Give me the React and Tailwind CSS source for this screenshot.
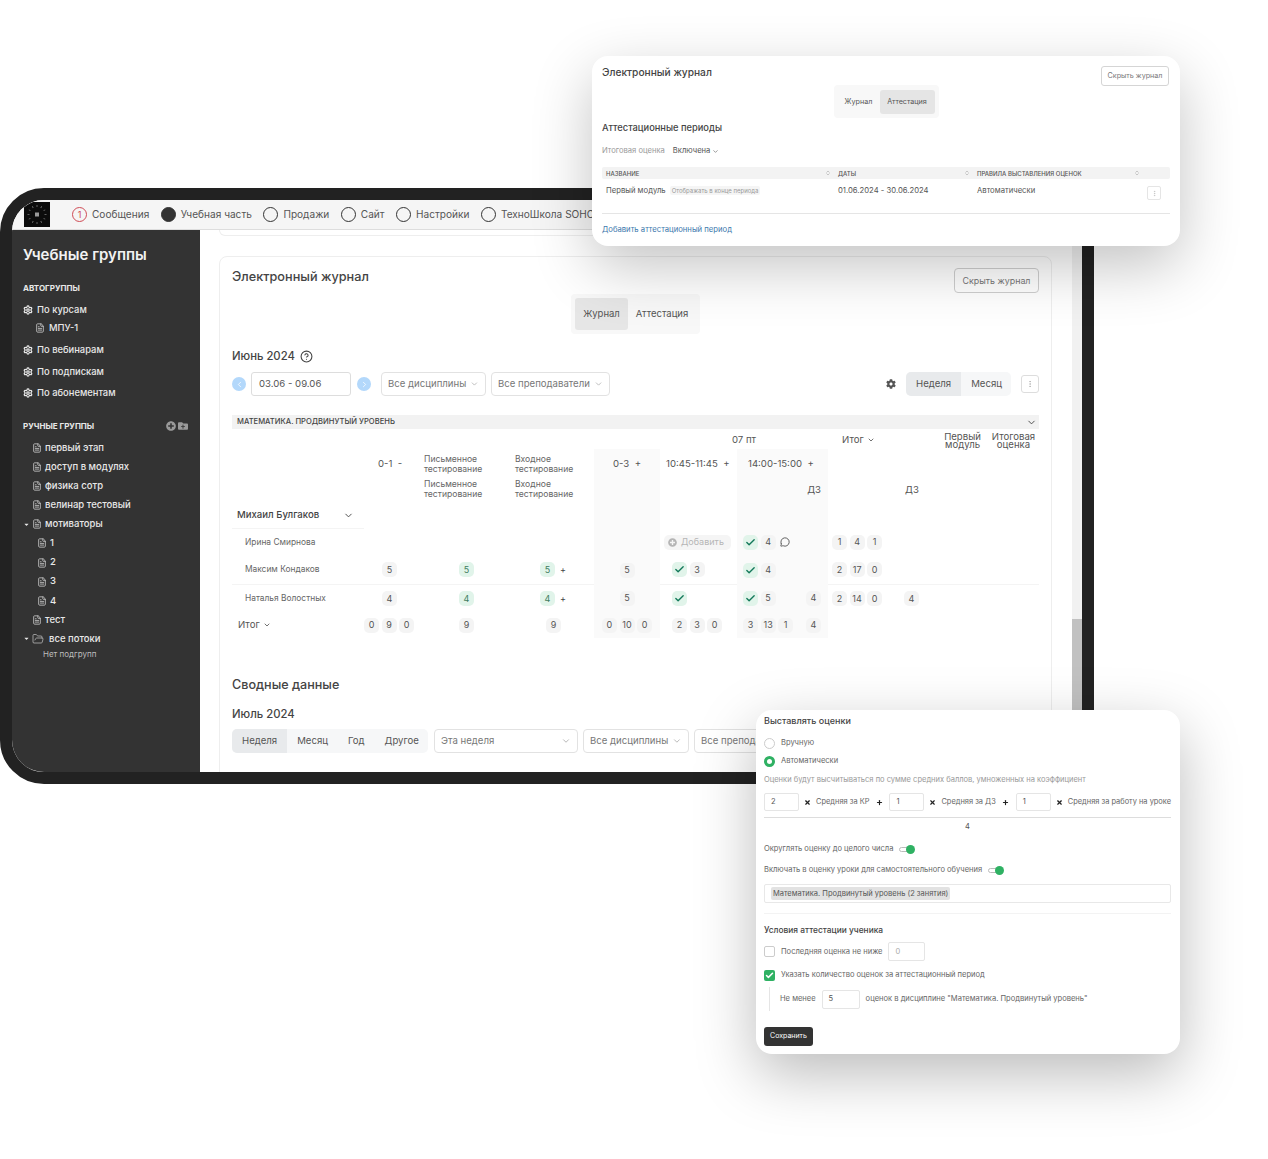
import { Check, ChevronDown, ChevronLeft, ChevronRight, ChevronsUpDown, CircleHelp, EllipsisVertical, FileText, FolderOpen, MessageCircle, Plus, Settings, X } from 'lucide-react';
import { FaCaretDown, FaCog, FaFolderPlus, FaPlusCircle } from 'react-icons/fa';

const navItems = [
  { label: 'Учебная часть', filled: true },
  { label: 'Продажи' },
  { label: 'Сайт' },
  { label: 'Настройки' },
  { label: 'ТехноШкола SOHO' },
];

// --- sidebar rows ---
const autoGroups = [
  { label: 'По вебинарам' },
  { label: 'По подпискам' },
  { label: 'По абонементам' },
];

const manualGroups = [
  { label: 'первый этап', pl: 'pl-[9px]' },
  { label: 'доступ в модулях', pl: 'pl-[9px]' },
  { label: 'физика сотр', pl: 'pl-[9px]' },
  { label: 'велинар тестовый', pl: 'pl-[9px]' },
  { label: 'мотиваторы', caret: true },
  { label: '1', pl: 'pl-[14px]' },
  { label: '2', pl: 'pl-[14px]' },
  { label: '3', pl: 'pl-[14px]' },
  { label: '4', pl: 'pl-[14px]' },
  { label: 'тест', pl: 'pl-[9px]' },
];

function Logo() {
  const angles = [0, 30, 60, 90, 120, 150, 180, 210, 240, 270, 300, 330];
  return (
    <svg viewBox="0 0 26 25" className="ml-[12px] mt-[2px] h-[25px] w-[26px] shrink-0 self-start bg-[#0c0c0c]">
      {angles.map(a => (
        <rect key={a} x="12.6" y="3" width="0.8" height="2" fill="#777777" transform={`rotate(${a} 13 12.5)`} />
      ))}
      <rect x="11" y="10.5" width="4" height="4" fill="#999999" />
    </svg>
  );
}

function Sidebar() {
  return (
    <aside className="w-[188px] shrink-0 bg-[#333333] text-[#e8e8e8] pl-[11px] pr-[12px] pt-[15px]">
      <h2 className="text-[15px] leading-[20px] font-semibold text-[#f2f2f2]">Учебные группы</h2>
      <div className="mt-[18px] text-[8px] leading-[10px] font-bold">АВТОГРУППЫ</div>
      <div className="mt-[11px] flex h-[12px] items-center gap-[4px] text-[9.4px] font-medium">
        <Settings size={10} strokeWidth={3} />По курсам
      </div>
      <div className="mt-[6px] flex h-[12px] items-center gap-[4px] pl-[12px] text-[9.4px] font-medium">
        <FileText size={10} className="text-[#c8c8c8]" />МПУ-1
      </div>
      {autoGroups.map(g => (
        <div key={g.label} className="mt-[9.8px] flex h-[12px] items-center gap-[4px] text-[9.4px] font-medium">
          <Settings size={10} strokeWidth={3} />{g.label}
        </div>
      ))}
      <div className="mt-[21px] flex h-[12px] items-center justify-between text-[8px] font-bold">
        <span>РУЧНЫЕ ГРУППЫ</span>
        <span className="flex items-center gap-[2px] text-[#9a9a9a]">
          <FaPlusCircle size={10} />
          <FaFolderPlus size={10} />
        </span>
      </div>
      <div className="mt-[6px]">
        {manualGroups.map(g => (
          <div key={g.label} className={`flex h-[19.1px] items-center text-[9.5px] font-medium ${g.pl || ''}`}>
            {g.caret && <FaCaretDown size={7} className="mr-[2px] text-[#e8e8e8]" />}
            <FileText size={10} className="mr-[3px] text-[#c8c8c8]" />
            {g.label}
          </div>
        ))}
        <div className="flex h-[19px] items-center text-[9.5px] font-medium">
          <FaCaretDown size={7} className="mr-[2px]" />
          <FolderOpen size={12} strokeWidth={1.4} className="mr-[5px] text-[#c8c8c8]" />
          все потоки
        </div>
        <div className="mt-[1px] pl-[20px] text-[8px] leading-[10px] text-[#bdbdbd]">Нет подгрупп</div>
      </div>
    </aside>
  );
}

function Chip({ children, tone }) {
  const toneClass = tone === 'green' ? 'bg-[#e1f4ea] text-[#3f7d5f]' : 'bg-[#f4f4f4] text-[#555555]';
  return (
    <span className={`flex h-[15px] w-[15px] shrink-0 items-center justify-center rounded-[5px] text-[9px] ${toneClass}`}>
      {children}
    </span>
  );
}

function CheckChip() {
  return (
    <span className="flex h-[15px] w-[15px] shrink-0 items-center justify-center rounded-[5px] bg-[#e1f4ea] text-[#14795a]">
      <Check size={11} strokeWidth={3} />
    </span>
  );
}

function Chips({ values, className = '' }) {
  return (
    <div className={`flex items-center gap-[2.6px] ${className}`}>
      {values.map((v, i) => <Chip key={i}>{v}</Chip>)}
    </div>
  );
}

const greyCol = 'bg-[#fafafa]';
const rowLine = 'border-b border-[#f4f4f4]';

function Journal() {
  const timeText = 'text-[9.6px] leading-[12px] text-[#555555] whitespace-nowrap';
  const lessonText = 'text-[8.6px] leading-[10px] text-[#666666]';
  const studentText = 'pl-[13px] text-[8.4px] text-[#666666]';
  const finalHead = 'text-center text-[9.6px] leading-[8px] text-[#555555]';

  return (
    <table className="mt-[3px] w-[807px] table-fixed">
      <colgroup>
        <col className="w-[132px]" />
        <col className="w-[60px]" />
        <col className="w-[91px]" />
        <col className="w-[79px]" />
        <col className="w-[66px]" />
        <col className="w-[77px]" />
        <col className="w-[91px]" />
        <col className="w-[72px]" />
        <col className="w-[40px]" />
        <col className="w-[48px]" />
        <col className="w-[51px]" />
      </colgroup>
      <tbody>
        <tr className="h-[17px] text-[#555555]">
          <td colSpan={5}></td>
          <td colSpan={2} className="text-center text-[9.6px]">07 пт</td>
          <td className="pl-[14px] text-[9.6px]">
            <span className="inline-flex items-center gap-[3px]">Итог <ChevronDown size={8} strokeWidth={2.5} /></span>
          </td>
          <td></td>
          <td className={`${finalHead} pr-[3px]`}>Первый модуль</td>
          <td className={finalHead}>Итоговая оценка</td>
        </tr>
        <tr className="h-[29px]">
          <td></td>
          <td className={`pl-[14px] ${timeText}`}>0-1 &nbsp;-</td>
          <td className={lessonText}>Письменное тестирование</td>
          <td className={lessonText}>Входное тестирование</td>
          <td className={`${greyCol} text-center ${timeText}`}>0-3 &nbsp;+</td>
          <td className={`pl-[6px] ${timeText}`}>10:45-11:45 &nbsp;+</td>
          <td className={`${greyCol} pl-[11px] ${timeText}`}>14:00-15:00 &nbsp;+</td>
          <td colSpan={4}></td>
        </tr>
        <tr className="h-[24px]">
          <td></td>
          <td></td>
          <td className={`${lessonText} pb-[2px]`}>Письменное тестирование</td>
          <td className={`${lessonText} pb-[2px]`}>Входное тестирование</td>
          <td className={greyCol}></td>
          <td></td>
          <td className={`${greyCol} pr-[7px] text-right text-[9.6px] text-[#555555]`}>ДЗ</td>
          <td></td>
          <td className="pl-[5px] text-[9.6px] text-[#555555]">ДЗ</td>
          <td colSpan={2}></td>
        </tr>
        <tr className="h-[26px]">
          <td className={rowLine}>
            <div className="flex items-center justify-between pl-[5px] pr-[10px] pt-[1px] text-[9.6px] font-medium text-[#444444]">
              Михаил Булгаков <ChevronDown size={11} />
            </div>
          </td>
          <td colSpan={3}></td>
          <td className={greyCol}></td>
          <td></td>
          <td className={greyCol}></td>
          <td colSpan={4}></td>
        </tr>
        <tr className="h-[28px]">
          <td className={studentText}>Ирина Смирнова</td>
          <td colSpan={3}></td>
          <td className={greyCol}></td>
          <td>
            <div className="ml-[4px] flex h-[15px] w-[67px] items-center gap-[4px] rounded-[5px] bg-[#f5f5f5] pl-[4px] text-[9px] text-[#b5b5b5]">
              <FaPlusCircle size={9} /> Добавить
            </div>
          </td>
          <td className={greyCol}>
            <div className="flex items-center gap-[2.6px] pl-[6px]">
              <CheckChip /><Chip>4</Chip>
              <MessageCircle size={10} className="ml-[2px] text-[#444444]" />
            </div>
          </td>
          <td><Chips values={[1, 4, 1]} className="pl-[4px]" /></td>
          <td colSpan={3}></td>
        </tr>
        <tr className="h-[28px]">
          <td className={`${studentText} ${rowLine}`}>Максим Кондаков</td>
          <td className={rowLine}><div className="pl-[18px]"><Chip>5</Chip></div></td>
          <td className={rowLine}><div className="pl-[35px]"><Chip tone="green">5</Chip></div></td>
          <td className={rowLine}>
            <div className="flex items-center gap-[5px] pl-[25px] text-[9px] text-[#444444]"><Chip tone="green">5</Chip>+</div>
          </td>
          <td className={greyCol}><div className="flex justify-center"><Chip>5</Chip></div></td>
          <td className={rowLine}><div className="flex items-center gap-[2.6px] pl-[12px]"><CheckChip /><Chip>3</Chip></div></td>
          <td className={greyCol}><div className="flex items-center gap-[2.6px] pl-[6px]"><CheckChip /><Chip>4</Chip></div></td>
          <td className={rowLine}><Chips values={[2, 17, 0]} className="pl-[4px]" /></td>
          <td colSpan={3} className={rowLine}></td>
        </tr>
        <tr className="h-[28px]">
          <td className={studentText}>Наталья Волостных</td>
          <td><div className="pl-[18px]"><Chip>4</Chip></div></td>
          <td><div className="pl-[35px]"><Chip tone="green">4</Chip></div></td>
          <td>
            <div className="flex items-center gap-[5px] pl-[25px] text-[9px] text-[#444444]"><Chip tone="green">4</Chip>+</div>
          </td>
          <td className={greyCol}><div className="flex justify-center"><Chip>5</Chip></div></td>
          <td><div className="pl-[12px]"><CheckChip /></div></td>
          <td className={greyCol}>
            <div className="flex items-center gap-[2.6px] pl-[6px] pr-[7px]">
              <CheckChip /><Chip>5</Chip><span className="ml-auto"><Chip>4</Chip></span>
            </div>
          </td>
          <td><Chips values={[2, 14, 0]} className="pl-[4px]" /></td>
          <td><div className="pl-[4px]"><Chip>4</Chip></div></td>
          <td colSpan={2}></td>
        </tr>
        <tr className="h-[26px]">
          <td className="pl-[6px] text-[9.6px] text-[#555555]">
            <span className="inline-flex items-center gap-[3px]">Итог <ChevronDown size={8} strokeWidth={2.5} /></span>
          </td>
          <td><Chips values={[0, 9, 0]} /></td>
          <td><div className="pl-[35px]"><Chip>9</Chip></div></td>
          <td><div className="pl-[31px]"><Chip>9</Chip></div></td>
          <td className={greyCol}><Chips values={[0, 10, 0]} className="justify-center" /></td>
          <td><Chips values={[2, 3, 0]} className="pl-[12px]" /></td>
          <td className={greyCol}>
            <div className="flex items-center gap-[2.6px] pl-[6px] pr-[7px]">
              <Chip>3</Chip><Chip>13</Chip><Chip>1</Chip><span className="ml-auto"><Chip>4</Chip></span>
            </div>
          </td>
          <td colSpan={4}></td>
        </tr>
      </tbody>
    </table>
  );
}

function Select({ label, className = '' }) {
  return (
    <div className={`flex h-[24px] shrink-0 items-center justify-between rounded-[4px] border border-[#e2e2e2] bg-white pl-[6px] pr-[6px] text-[9.6px] text-[#777777] whitespace-nowrap ${className}`}>
      {label} <ChevronDown size={10} className="ml-[4px] text-[#aaaaaa]" />
    </div>
  );
}

function Segmented({ items, className = '' }) {
  return (
    <div className={`flex h-[24px] shrink-0 items-center rounded-[5px] bg-[#f6f7f8] text-[9.6px] text-[#555555] ${className}`}>
      {items.map((item, i) => (
        <span key={item} className={`flex h-full items-center px-[10px] ${i === 0 ? 'rounded-l-[5px] bg-[#e8eaec]' : ''}`}>{item}</span>
      ))}
    </div>
  );
}

function MainPanel() {
  return (
    <main className="relative min-w-0 flex-1 overflow-hidden bg-white pl-[19px]">
      <div className="h-[6px] w-[833px] rounded-b-[8px] border border-t-0 border-[#eeeeee]"></div>
      <section className="mt-[20px] h-[600px] w-[833px] rounded-[8px] border border-[#eeeeee] px-[12px]">
        <div className="flex h-[37px] items-start justify-between pt-[11px]">
          <h3 className="text-[12.7px] leading-[18px] font-medium text-[#444444]">Электронный журнал</h3>
          <button className="h-[25px] w-[85px] rounded-[4px] border border-[#cfcfcf] text-[8.9px] text-[#777777]">Скрыть журнал</button>
        </div>
        <div className="flex justify-center">
          <div className="flex h-[40px] w-[129px] items-center rounded-[4px] bg-[#f8f8f8] p-[4px] text-[9.5px] text-[#555555]">
            <span className="flex h-full w-[53px] items-center justify-center rounded-[3px] bg-[#e6e6e6]">Журнал</span>
            <span className="flex-1 text-center">Аттестация</span>
          </div>
        </div>
        <div className="mt-[13px] flex items-center gap-[5px] text-[11.3px] leading-[18px] font-medium text-[#444444]">
          Июнь 2024 <CircleHelp size={13} />
        </div>
        <div className="mt-[7px] flex h-[24px] items-center">
          <span className="flex h-[14px] w-[14px] items-center justify-center rounded-full bg-[#b3d8fb] text-white"><ChevronLeft size={9} /></span>
          <div className="ml-[5px] flex h-[24px] w-[100px] items-center rounded-[3px] border border-[#dddddd] pl-[7px] text-[9.6px] text-[#555555]">03.06 - 09.06</div>
          <span className="ml-[6px] flex h-[14px] w-[14px] items-center justify-center rounded-full bg-[#b3d8fb] text-white"><ChevronRight size={9} /></span>
          <Select label="Все дисциплины" className="ml-[10px] w-[105px]" />
          <Select label="Все преподаватели" className="ml-[5px] w-[119px]" />
          <FaCog size={10} className="ml-[276px] text-[#555555]" />
          <Segmented items={['Неделя', 'Месяц']} className="ml-[10px] w-[105px]" />
          <span className="ml-[10px] flex h-[18px] w-[18px] items-center justify-center rounded-[3px] border border-[#dddddd] text-[#aaaaaa]"><EllipsisVertical size={8} /></span>
        </div>
        <div className="mt-[19px] flex h-[14px] items-center justify-between bg-[#f2f2f2] pl-[5px] pr-[2px] text-[7.6px] font-medium text-[#444444]">
          МАТЕМАТИКА. ПРОДВИНУТЫЙ УРОВЕНЬ <ChevronDown size={11} />
        </div>
        <Journal />
        <h3 className="mt-[38px] text-[12.6px] leading-[18px] font-medium text-[#444444]">Сводные данные</h3>
        <div className="mt-[11px] text-[11.3px] leading-[18px] font-medium text-[#444444]">Июль 2024</div>
        <div className="mt-[6px] flex h-[24px] items-center">
          <Segmented items={['Неделя', 'Месяц', 'Год', 'Другое']} className="w-[196px]" />
          <Select label="Эта неделя" className="ml-[6px] w-[144px] text-[#555555]" />
          <Select label="Все дисциплины" className="ml-[5px] w-[106px]" />
          <Select label="Все преподаватели" className="ml-[5px] w-[119px]" />
        </div>
      </section>
    </main>
  );
}

function AppWindow() {
  return (
    <div className="absolute left-0 top-[188px] flex h-[596px] w-[1094px] flex-col overflow-hidden rounded-[44px] rounded-r-none border-[12px] border-[#222222] bg-white">
      <header className="flex h-[30px] shrink-0 items-center border-b border-[#dddddd] bg-[#f5f5f5] text-[10.1px] text-[#555555] whitespace-nowrap">
        <Logo />
        <span className="ml-[22px] flex h-[15px] w-[15px] items-center justify-center rounded-full border border-[#cf4b55] text-[9px] text-[#cf4b55]">1</span>
        <span className="ml-[5px]">Сообщения</span>
        {navItems.map(item => (
          <span key={item.label} className="ml-[11.5px] flex items-center gap-[5px]">
            <span className={`h-[15px] w-[15px] rounded-full border border-[#333333] ${item.filled ? 'bg-[#333333]' : ''}`}></span>
            {item.label}
          </span>
        ))}
      </header>
      <div className="flex min-h-0 flex-1">
        <Sidebar />
        <MainPanel />
        <div className="relative w-[10px] shrink-0 bg-[#f1f1f1]">
          <div className="absolute bottom-0 left-0 h-[153px] w-full bg-[#c1c1c1]"></div>
        </div>
      </div>
    </div>
  );
}

function AttestationCard() {
  const sortIcon = <ChevronsUpDown size={6} className="text-[#999999]" />;
  return (
    <div className="absolute left-[592px] top-[56px] h-[190px] w-[588px] rounded-[16px] bg-white px-[10px] shadow-[0_20px_60px_rgba(0,0,0,0.24)]">
      <div className="flex h-[29px] items-start justify-between pt-[9px]">
        <h3 className="text-[10.2px] leading-[14px] font-medium text-[#444444]">Электронный журнал</h3>
        <button className="mr-px mt-px h-[20px] w-[68px] rounded-[3px] border border-[#d5d5d5] text-[7.2px] text-[#777777]">Скрыть журнал</button>
      </div>
      <div className="flex justify-center">
        <div className="flex h-[33px] w-[105px] items-center rounded-[4px] bg-[#f8f8f8] px-[4px] pt-[1px] text-[7.2px] text-[#555555]">
          <span className="flex-1 text-center">Журнал</span>
          <span className="flex h-[24px] w-[55px] items-center justify-center rounded-[3px] bg-[#e5e5e5]">Аттестация</span>
        </div>
      </div>
      <div className="mt-[3px] text-[9.3px] leading-[14px] font-medium text-[#444444]">Аттестационные периоды</div>
      <div className="mt-[10px] flex items-center text-[7.6px] leading-[12px]">
        <span className="text-[#999999]">Итоговая оценка</span>
        <span className="ml-[8px] inline-flex items-center gap-[2px] text-[#555555]">Включена <ChevronDown size={7} /></span>
      </div>
      <div className="mt-[10px] grid h-[12px] grid-cols-[232px_139px_170px_1fr] items-center rounded-[2px] bg-[#f3f3f3] pl-[4px] text-[6px] font-medium text-[#555555]">
        <span className="flex items-center justify-between pr-[7px]">НАЗВАНИЕ {sortIcon}</span>
        <span className="flex items-center justify-between pr-[7px]">ДАТЫ {sortIcon}</span>
        <span className="flex items-center justify-between pr-[7px]">ПРАВИЛА ВЫСТАВЛЕНИЯ ОЦЕНОК {sortIcon}</span>
      </div>
      <div className="grid h-[35px] grid-cols-[232px_139px_170px_1fr] items-start border-b border-[#e5e5e5] pl-[4px] pt-[6px] text-[7.7px] text-[#555555]">
        <span className="flex items-center gap-[4px]">Первый модуль <span className="rounded-[2px] bg-[#f5f5f5] px-[2px] text-[6px] text-[#999999]">Отображать в конце периода</span></span>
        <span>01.06.2024 - 30.06.2024</span>
        <span>Автоматически</span>
        <span className="mt-[1px] flex h-[14px] w-[14px] items-center justify-center rounded-[2px] border border-[#e5e5e5] text-[#bbbbbb]"><EllipsisVertical size={7} /></span>
      </div>
      <div className="mt-[10px] text-[7.7px] text-[#3c78ad]">Добавить аттестационный период</div>
    </div>
  );
}

function NumberBox({ value, className = '' }) {
  return (
    <span className={`flex h-[18px] w-[35px] shrink-0 items-center rounded-[2px] border border-[#e5e5e5] bg-white pl-[6px] text-[7.5px] text-[#555555] ${className}`}>{value}</span>
  );
}

function Toggle() {
  return (
    <span className="relative ml-[6px] inline-block h-[5px] w-[14px] rounded-full border border-[#bbbbbb]">
      <span className="absolute right-[-3px] top-[-3px] h-[9px] w-[9px] rounded-full bg-[#2fb163]"></span>
    </span>
  );
}

function GradesCard() {
  const label = 'text-[7.55px] text-[#666666] whitespace-nowrap';
  const formula = 'text-[7.45px] text-[#666666] whitespace-nowrap';
  const times = <X size={7} strokeWidth={4} className="text-[#222222]" />;
  const plus = <Plus size={7} strokeWidth={4} className="text-[#222222]" />;

  return (
    <div className="absolute left-[756px] top-[710px] h-[344px] w-[424px] rounded-[16px] bg-white pl-[8px] pr-[9px] shadow-[0_20px_60px_rgba(0,0,0,0.27)]">
      <h3 className="mt-[4px] text-[9px] leading-[14px] font-medium text-[#444444]">Выставлять оценки</h3>
      <div className="mt-[9px] flex h-[12px] items-center gap-[6px]">
        <span className="h-[11px] w-[11px] rounded-full border border-[#cccccc]"></span>
        <span className={label}>Вручную</span>
      </div>
      <div className="mt-[6px] flex h-[12px] items-center gap-[6px]">
        <span className="h-[11px] w-[11px] rounded-full border-[3px] border-[#2fb163]"></span>
        <span className={label}>Автоматически</span>
      </div>
      <div className="mt-[7px] text-[7.53px] leading-[12px] text-[#999999]">Оценки будут высчитываться по сумме средних баллов, умноженных на коэффициент</div>
      <div className="mt-[7px] flex h-[18px] items-center">
        <NumberBox value="2" />
        <span className="ml-[5px]">{times}</span>
        <span className={`ml-[5px] ${formula}`}>Средняя за КР</span>
        <span className="ml-[6.5px]">{plus}</span>
        <NumberBox value="1" className="ml-[6.5px]" />
        <span className="ml-[5px]">{times}</span>
        <span className={`ml-[5px] ${formula}`}>Средняя за ДЗ</span>
        <span className="ml-[6.5px]">{plus}</span>
        <NumberBox value="1" className="ml-[6.5px]" />
        <span className="ml-[5px]">{times}</span>
        <span className={`ml-[5px] ${formula}`}>Средняя за работу на уроке</span>
      </div>
      <div className="mt-[6px] border-t border-[#dddddd] pt-[4px] text-center text-[7.5px] leading-[10px] text-[#555555]">4</div>
      <div className="mt-[11px] flex h-[12px] items-center">
        <span className={label}>Округлять оценку до целого числа</span>
        <Toggle />
      </div>
      <div className="mt-[9px] flex h-[12px] items-center">
        <span className={label}>Включать в оценку уроки для самостоятельного обучения</span>
        <Toggle />
      </div>
      <div className="mt-[8px] flex h-[19px] items-center rounded-[2px] border border-[#e8e8e8] pl-[6px]">
        <span className="rounded-[2px] bg-[#e2e2e2] px-[2px] text-[7.5px] leading-[13px] text-[#555555]">Математика. Продвинутый уровень (2 занятия)</span>
      </div>
      <div className="mt-[10px] border-t border-[#f3f3f3]"></div>
      <div className="mt-[10px] text-[8.4px] leading-[12px] font-medium text-[#444444]">Условия аттестации ученика</div>
      <div className="mt-[6px] flex h-[19px] items-center">
        <span className="h-[11px] w-[11px] rounded-[2px] border border-[#cccccc]"></span>
        <span className={`ml-[6px] ${label}`}>Последняя оценка не ниже</span>
        <NumberBox value="0" className="ml-[6px] h-[19px] w-[37px] border-[#dddddd] bg-[#eeeeee] text-[#aaaaaa]" />
      </div>
      <div className="mt-[4px] flex h-[20px] items-center">
        <span className="flex h-[11px] w-[11px] items-center justify-center rounded-[2px] bg-[#2fb163] text-white"><Check size={9} strokeWidth={4} /></span>
        <span className={`ml-[6px] ${label}`}>Указать количество оценок за аттестационный период</span>
      </div>
      <div className="ml-[5px] mt-[2px] flex h-[24px] items-center border-l border-[#e5e5e5] pl-[10px]">
        <span className={label}>Не менее</span>
        <NumberBox value="5" className="ml-[6px] h-[19px] w-[38px]" />
        <span className={`ml-[6px] ${label}`}>оценок в дисциплине "Математика. Продвинутый уровень"</span>
      </div>
      <button className="mt-[16px] h-[19px] w-[49px] rounded-[3px] bg-[#333333] text-[7px] text-white">Сохранить</button>
    </div>
  );
}

export default function App() {
  return (
    <div className="relative h-[1159px] w-[1268px] overflow-hidden bg-white font-['Inter',sans-serif]">
      <AppWindow />
      <AttestationCard />
      <GradesCard />
    </div>
  );
}
